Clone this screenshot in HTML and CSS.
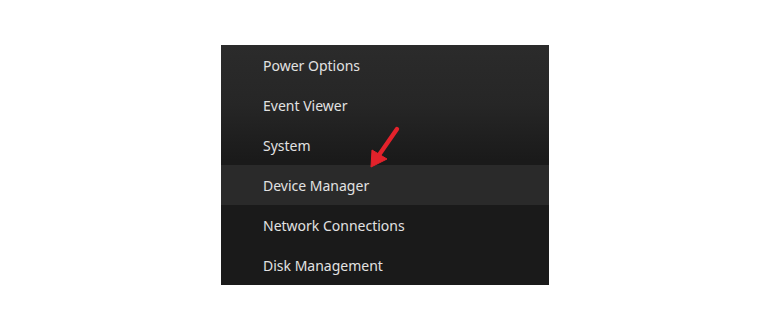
FILE: index.html
```html
<!DOCTYPE html>
<html>
<head>
<meta charset="utf-8">
<link rel="stylesheet" href="styles.css">
</head>
<body>
<div class="stage">
  <div class="menu">
    <div class="item">Power Options</div>
    <div class="item">Event Viewer</div>
    <div class="item">System</div>
    <div class="item active">Device Manager</div>
    <div class="item">Network Connections</div>
    <div class="item">Disk Management</div>
    <svg class="arrow" width="40" height="50" viewBox="0 0 40 50">
      <line x1="31" y1="5" x2="13" y2="31" stroke="#e3222b" stroke-width="4.4" stroke-linecap="round"/>
      <polygon points="5,43 6,26 21,35" fill="#e3222b" stroke="#e3222b" stroke-width="1" stroke-linejoin="round"/>
    </svg>
  </div>
</div>
</body>
</html>
```
FILE: styles.css
```css
html, body {
  margin: 0;
  padding: 0;
  background: #ffffff;
}
.stage {
  width: 770px;
  height: 330px;
  display: flex;
  justify-content: flex-start;
  padding: 45px 0 0 221px;
  box-sizing: border-box;
}
.menu {
  position: relative;
  width: 328px;
  height: 240px;
  background: linear-gradient(to bottom, #2b2b2b 0px, #262626 60px, #1a1a1a 115px, #1a1a1a 240px);
  display: flex;
  flex-direction: column;
}
.item {
  height: 40px;
  display: flex;
  align-items: center;
  padding-left: 42px;
  font-family: "Noto Sans", "Open Sans", sans-serif;
  font-size: 14px;
  color: #e2e2e2;
}
.item.active {
  background: #2a2a2a;
}
.arrow {
  position: absolute;
  left: 145px;
  top: 79px;
}
```
